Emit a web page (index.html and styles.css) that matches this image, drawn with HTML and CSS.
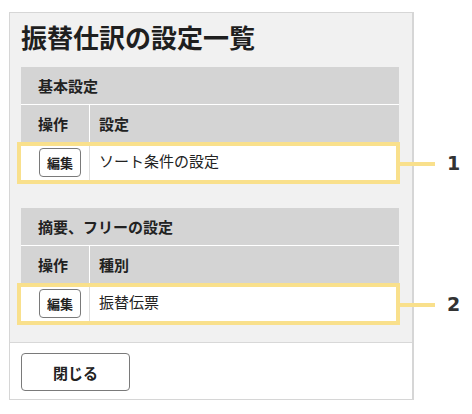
FILE: index.html
```html
<!DOCTYPE html>
<html lang="ja">
<head>
<meta charset="utf-8">
<title>振替仕訳の設定一覧</title>
<link rel="stylesheet" href="styles.css">
</head>
<body>
<div class="panel">
  <div class="panel-body">
    <h1 class="title">振替仕訳の設定一覧</h1>

    <div class="grid-table">
      <div class="row row-caption">基本設定</div>
      <div class="row row-head">
        <div class="cell cell-op">操作</div>
        <div class="cell cell-main">設定</div>
      </div>
      <div class="row row-data">
        <div class="cell cell-op"><button class="btn-edit">編集</button></div>
        <div class="cell cell-main">ソート条件の設定</div>
        <div class="hl">
          <span class="hl-line"></span>
          <span class="hl-num">1</span>
        </div>
      </div>
    </div>

    <div class="grid-table">
      <div class="row row-caption">摘要、フリーの設定</div>
      <div class="row row-head">
        <div class="cell cell-op">操作</div>
        <div class="cell cell-main">種別</div>
      </div>
      <div class="row row-data">
        <div class="cell cell-op"><button class="btn-edit">編集</button></div>
        <div class="cell cell-main">振替伝票</div>
        <div class="hl">
          <span class="hl-line"></span>
          <span class="hl-num">2</span>
        </div>
      </div>
    </div>
  </div>
  <div class="panel-footer">
    <button class="btn-close">閉じる</button>
  </div>
</div>
</body>
</html>
```

FILE: styles.css
```css
* {
  box-sizing: border-box;
}

body {
  margin: 0;
  background: #ffffff;
  font-family: "Noto Sans CJK JP", "Noto Sans", sans-serif;
  color: #222222;
}

.panel {
  margin: 12px 0 0 9px;
  width: 405px;
  height: 388px;
  border: 1px solid #d6d6d6;
  border-right-width: 2px;
  background: #f1f1f1;
  display: flex;
  flex-direction: column;
}

.panel-body {
  flex: 1;
  min-height: 0;
  padding: 11px 13px 0 11px;
}

.title {
  margin: 0 0 17px 0;
  font-size: 26px;
  line-height: 26px;
  font-weight: 700;
  color: #1f1f1f;
}

.grid-table {
  width: 378px;
  margin-bottom: 26px;
}

.grid-table:last-child {
  margin-bottom: 0;
}

.row {
  display: flex;
  align-items: stretch;
  font-size: 15px;
}

.row-caption {
  height: 38px;
  background: #d4d4d4;
  align-items: center;
  padding-left: 17px;
  font-weight: 700;
  border-bottom: 1px solid #ffffff;
}

.row-head {
  height: 37px;
  background: #d4d4d4;
  font-weight: 700;
}

.row-head .cell-op {
  border-right: 1px solid #ffffff;
}

.row-data {
  position: relative;
  height: 40px;
  background: #ffffff;
}

.row-data .cell-op {
  border-right: 1px solid #dddddd;
}

.row-data .cell-main {
  padding-bottom: 3px;
}

.cell {
  display: flex;
  align-items: center;
}

.cell-op {
  width: 69px;
  padding-left: 17px;
}

.cell-main {
  flex: 1;
  padding-left: 9px;
}

.btn-edit {
  margin-left: 1px;
  height: 29px;
  padding: 0 7px;
  font-family: "Noto Sans CJK JP", sans-serif;
  font-size: 13px;
  font-weight: 700;
  color: #222222;
  background: #ffffff;
  border: 1px solid #7a7a7a;
  border-radius: 4px;
  line-height: 27px;
}

.hl {
  position: absolute;
  left: -4px;
  right: -1px;
  top: 0;
  bottom: -2px;
  border: 4px solid #f9e08c;
  pointer-events: none;
}

.hl-line {
  position: absolute;
  left: calc(100% + 4px);
  top: 50%;
  margin-top: -1px;
  width: 35px;
  height: 4px;
  background: #f9e08c;
}

.hl-num {
  position: absolute;
  left: calc(100% + 51px);
  top: 50%;
  margin-top: -12px;
  font-family: "DejaVu Sans", sans-serif;
  font-size: 19px;
  line-height: 24px;
  font-weight: 700;
  color: #333333;
}

.panel-footer {
  height: 57px;
  flex-shrink: 0;
  border-top: 1px solid #d8d8d8;
  background: #ffffff;
  padding: 10px 0 0 11px;
}

.btn-close {
  width: 109px;
  height: 38px;
  font-family: "Noto Sans CJK JP", sans-serif;
  font-size: 15px;
  font-weight: 700;
  color: #222222;
  background: #ffffff;
  border: 1px solid #7a7a7a;
  border-radius: 4px;
}
```
